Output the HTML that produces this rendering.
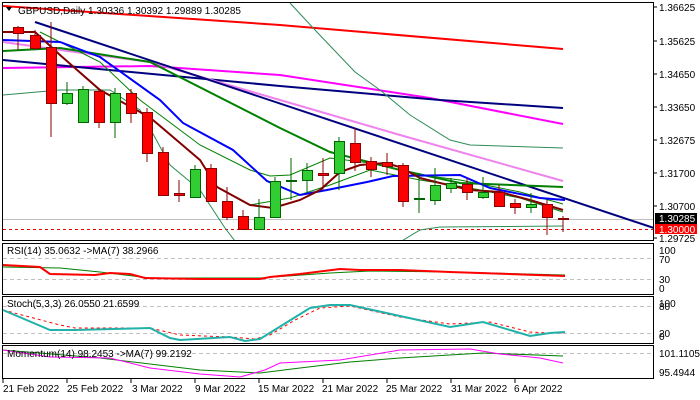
<!DOCTYPE html>
<html><head><meta charset="utf-8"><style>
html,body{margin:0;padding:0;background:#fff;}
svg{display:block;font-family:"Liberation Sans",sans-serif;font-size:10px;}
</style></head><body>
<svg width="700" height="400" viewBox="0 0 700 400" xmlns="http://www.w3.org/2000/svg">
<rect width="700" height="400" fill="#fff"/>
<g fill="none" stroke="#000" stroke-width="1">
<rect x="2.5" y="2.5" width="651" height="238"/>
<rect x="2.5" y="243.5" width="651" height="51"/>
<rect x="2.5" y="296.5" width="651" height="47"/>
<rect x="2.5" y="345.5" width="651" height="33"/>
</g>
<defs><clipPath id="m"><rect x="3" y="3" width="650" height="237"/></clipPath></defs>
<g clip-path="url(#m)" fill="none">
<line x1="3" y1="219.5" x2="653" y2="219.5" stroke="#c0c0c0"/>
<line x1="3" y1="229.5" x2="653" y2="229.5" stroke="#e00" stroke-dasharray="3,3"/>
<polyline stroke="#f00" stroke-width="2" points="3,6 280,25 563,49"/>
<polyline stroke="#ff00ff" stroke-width="2" points="3,68 150,66 280,75 430,98 563,124"/>
<polyline stroke="#00007f" stroke-width="2" points="3,60 280,86 440,100 563,108"/>
<polyline stroke="#ee82ee" stroke-width="2" points="3,42 60,50 150,62 280,100 400,135 563,181"/>
<polyline stroke="#00007f" stroke-width="2" points="35,22 660,230"/>
<polyline stroke="#2e8b57" stroke-width="1" points="290,3 315,30 355,72 380,90 410,115 450,140 470,145 563,148"/>
<polyline stroke="#2e8b57" stroke-width="1" points="3,95 60,90 110,90 140,110 170,165 200,190 225,228 238,245"/>
<polyline stroke="#2e8b57" stroke-width="1" points="395,245 420,230 440,227 563,226"/>
<polyline stroke="#008000" stroke-width="2" points="3,51 60,48 150,62 280,128 330,152 400,170 460,183 563,187"/>
<polyline stroke="#008000" stroke-width="1" points="40,32 100,62 140,100 200,145 250,170 270,176 290,175 330,158 370,163 420,175 460,180 520,192 563,204"/>
<polyline stroke="#008000" stroke-width="1" points="250,205 290,198 330,185 370,170 420,180 470,188 520,198 563,212"/>
<polyline stroke="#0000ff" stroke-width="2" points="3,40 60,42 100,57 160,100 183,123 233,150 267,181 300,195 327,190 367,182 393,176 460,175 490,188 540,198 565,200"/>
<polyline stroke="#800000" stroke-width="2" points="3,32 35,32 60,55 100,90 140,112 153,120 200,160 217,187 250,205 273,208 300,200 320,190 340,172 360,165 385,163 400,167 420,178 440,183 470,190 500,192 530,200 563,210"/>
</g>
<g stroke="#000" stroke-width="1">
<g stroke="#8b0000">
<line x1="18" y1="26" x2="18" y2="50"/><line x1="35" y1="30" x2="35" y2="50"/><line x1="51" y1="22" x2="51" y2="137"/><line x1="99" y1="88" x2="99" y2="128"/><line x1="131" y1="89" x2="131" y2="123"/><line x1="147" y1="108" x2="147" y2="162"/><line x1="163" y1="147" x2="163" y2="196"/><line x1="179" y1="180" x2="179" y2="202"/><line x1="211" y1="164" x2="211" y2="201"/><line x1="227" y1="187" x2="227" y2="220"/><line x1="243" y1="210" x2="243" y2="229"/><line x1="323" y1="158" x2="323" y2="190"/><line x1="355" y1="128" x2="355" y2="171"/><line x1="371" y1="157" x2="371" y2="177"/><line x1="387" y1="153" x2="387" y2="175"/><line x1="403" y1="163" x2="403" y2="207"/><line x1="467" y1="178" x2="467" y2="200"/><line x1="499" y1="185" x2="499" y2="206"/><line x1="515" y1="199" x2="515" y2="214"/><line x1="547" y1="200" x2="547" y2="235"/><line x1="563" y1="216" x2="563" y2="232"/>
</g>
<g stroke="#006400">
<line x1="67" y1="82" x2="67" y2="105"/><line x1="83" y1="86" x2="83" y2="122"/><line x1="115" y1="88" x2="115" y2="138"/><line x1="195" y1="165" x2="195" y2="197"/><line x1="259" y1="199" x2="259" y2="229"/><line x1="275" y1="177" x2="275" y2="217"/><line x1="291" y1="158" x2="291" y2="200"/><line x1="307" y1="163" x2="307" y2="192"/><line x1="339" y1="137" x2="339" y2="190"/><line x1="419" y1="173" x2="419" y2="213"/><line x1="435" y1="168" x2="435" y2="205"/><line x1="451" y1="178" x2="451" y2="193"/><line x1="483" y1="177" x2="483" y2="199"/><line x1="531" y1="193" x2="531" y2="213"/>
</g>
<g fill="#f00" stroke="#8b0000">
<rect x="13.5" y="27.5" width="10" height="6"/><rect x="30.5" y="35.5" width="10" height="13"/><rect x="46.5" y="47.5" width="10" height="56"/><rect x="94.5" y="91.5" width="10" height="31"/><rect x="126.5" y="93.5" width="10" height="20"/><rect x="142.5" y="112.5" width="10" height="41"/><rect x="158.5" y="152.5" width="10" height="43"/><rect x="174.5" y="193.5" width="10" height="2"/><rect x="206.5" y="168.5" width="10" height="33"/><rect x="222.5" y="201.5" width="10" height="16"/><rect x="238.5" y="216.5" width="10" height="13"/><rect x="318.5" y="173.5" width="10" height="2"/><rect x="350.5" y="143.5" width="10" height="19"/><rect x="366.5" y="161.5" width="10" height="8"/><rect x="382.5" y="162.5" width="10" height="4"/><rect x="398.5" y="165.5" width="10" height="36"/><rect x="462.5" y="184.5" width="10" height="8"/><rect x="494.5" y="192.5" width="10" height="14"/><rect x="510.5" y="203.5" width="10" height="4"/><rect x="542.5" y="204.5" width="10" height="13"/><rect x="558.5" y="218.5" width="10" height="1"/>
</g>
<g fill="#32cd32" stroke="#006400">
<rect x="62.5" y="93.5" width="10" height="10"/><rect x="78.5" y="89.5" width="10" height="33"/><rect x="110.5" y="93.5" width="10" height="29"/><rect x="190.5" y="169.5" width="10" height="28"/><rect x="254.5" y="217.5" width="10" height="12"/><rect x="270.5" y="181.5" width="10" height="36"/><rect x="286.5" y="180.5" width="10" height="1"/><rect x="302.5" y="170.5" width="10" height="10"/><rect x="334.5" y="141.5" width="10" height="32"/><rect x="414.5" y="198.5" width="10" height="1"/><rect x="430.5" y="185.5" width="10" height="15"/><rect x="446.5" y="183.5" width="10" height="5"/><rect x="478.5" y="192.5" width="10" height="5"/><rect x="526.5" y="204.5" width="10" height="3"/>
</g>
</g>
<path d="M6,7 L12,7 L9,11 Z" fill="#000"/>
<text x="18" y="14" fill="#000">GBPUSD,Daily  1.30336 1.30392 1.29889 1.30285</text>
<g fill="#000">
<text x="659" y="11">1.36625</text><text x="659" y="45">1.35625</text><text x="659" y="78">1.34650</text><text x="659" y="111">1.33650</text><text x="659" y="144">1.32675</text><text x="659" y="177">1.31700</text><text x="659" y="210">1.30700</text><text x="659" y="242">1.29725</text>
</g>
<g stroke="#000"><line x1="654" y1="7" x2="657" y2="7"/><line x1="654" y1="41" x2="657" y2="41"/><line x1="654" y1="74" x2="657" y2="74"/><line x1="654" y1="107" x2="657" y2="107"/><line x1="654" y1="140" x2="657" y2="140"/><line x1="654" y1="173" x2="657" y2="173"/><line x1="654" y1="206" x2="657" y2="206"/><line x1="654" y1="238" x2="657" y2="238"/></g>
<rect x="655" y="213" width="42" height="11" fill="#000"/><text x="659" y="222" fill="#fff">1.30285</text>
<rect x="655" y="224" width="42" height="10" fill="#f00"/><text x="659" y="233" fill="#fff">1.30000</text>
<g fill="none">
<line x1="3" y1="258.5" x2="653" y2="258.5" stroke="#c0c0c0" stroke-dasharray="4,3"/>
<line x1="3" y1="279.5" x2="653" y2="279.5" stroke="#c0c0c0" stroke-dasharray="4,3"/>
<polyline stroke="#008000" points="3,267 60,268 100,272 150,278 260,278 330,273 370,271 450,272 565,275"/>
<polyline stroke="#f00" stroke-width="2" points="3,265 40,267 50,274 95,275 110,273 130,274 145,278 200,279 260,279 270,277 300,274 340,269 360,270 400,270 450,272 565,276"/>
</g>
<text x="7" y="254" fill="#000">RSI(14) 35.0632  -&gt;MA(7) 38.2966</text>
<g fill="#000"><text x="659" y="254">100</text><text x="659" y="263">70</text><text x="659" y="283">30</text><text x="659" y="292">0</text></g>
<g fill="none">
<line x1="3" y1="306.5" x2="653" y2="306.5" stroke="#c0c0c0" stroke-dasharray="4,3"/>
<line x1="3" y1="333.5" x2="653" y2="333.5" stroke="#c0c0c0" stroke-dasharray="4,3"/>
<polyline stroke="#f00" stroke-dasharray="3,3" points="3,310 60,325 75,328 150,328 180,335 230,337 255,339 270,335 295,320 320,308 350,306 400,317 450,324 490,322 510,327 530,332 550,333 565,333"/>
<polyline stroke="#20b2aa" stroke-width="2" points="3,310 50,330 75,330 150,328 170,338 180,340 230,337 245,341 260,339 310,308 330,305 350,305 400,316 450,327 483,322 530,336 550,333 565,332"/>
</g>
<text x="7" y="307" fill="#000">Stoch(5,3,3) 26.0550 21.6599</text>
<g fill="#000"><text x="659" y="307">100</text><text x="659" y="310">80</text><text x="659" y="337">20</text><text x="659" y="340">0</text></g>
<g fill="none">
<line x1="3" y1="353.5" x2="653" y2="353.5" stroke="#c0c0c0" stroke-dasharray="4,3"/>
<polyline stroke="#008000" points="3,350 100,358 200,370 260,373 300,368 350,362 400,358 483,353 563,356"/>
<polyline stroke="#ff00ff" points="3,350 50,357 110,358 150,368 200,374 240,377 265,370 280,363 340,360 400,350 470,349 500,354 540,358 563,363"/>
</g>
<text x="7" y="357" fill="#000">Momentum(14) 98.2453  -&gt;MA(7) 99.2192</text>
<g fill="#000"><text x="659" y="357">101.1105</text><text x="659" y="376">95.4944</text></g>
<g stroke="#000"><line x1="3" y1="379" x2="3" y2="383"/><line x1="67" y1="379" x2="67" y2="383"/><line x1="131" y1="379" x2="131" y2="383"/><line x1="195" y1="379" x2="195" y2="383"/><line x1="259" y1="379" x2="259" y2="383"/><line x1="323" y1="379" x2="323" y2="383"/><line x1="387" y1="379" x2="387" y2="383"/><line x1="451" y1="379" x2="451" y2="383"/><line x1="515" y1="379" x2="515" y2="383"/></g>
<g fill="#000"><text x="3" y="392">21 Feb 2022</text><text x="67" y="392">25 Feb 2022</text><text x="132" y="392">3 Mar 2022</text><text x="195" y="392">9 Mar 2022</text><text x="258" y="392">15 Mar 2022</text><text x="322" y="392">21 Mar 2022</text><text x="386" y="392">25 Mar 2022</text><text x="451" y="392">31 Mar 2022</text><text x="514" y="392">6 Apr 2022</text></g>
</svg>
</body></html>
